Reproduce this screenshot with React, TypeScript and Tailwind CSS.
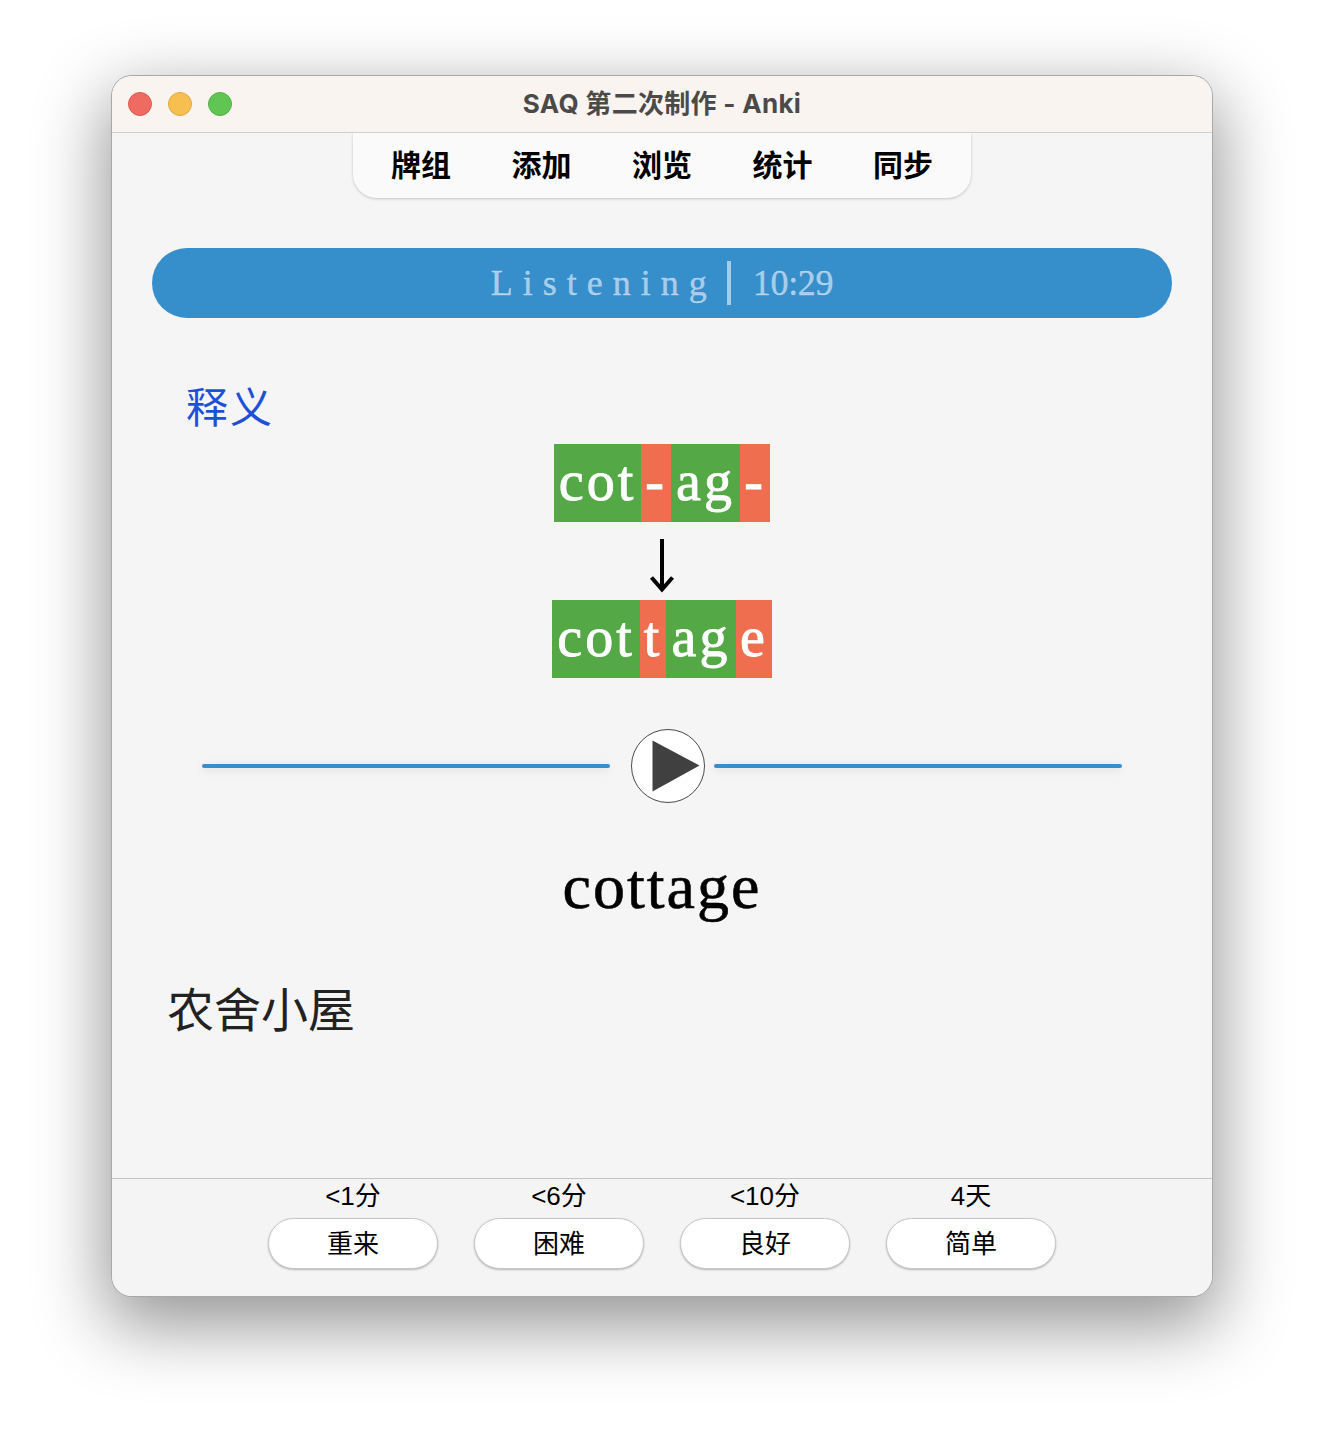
const serif = "font-['Liberation_Serif','Noto_Sans_CJK_SC',serif]";

const navItems = ['牌组', '添加', '浏览', '统计', '同步'];

const answers = [
  { time: '<1分', label: '重来' },
  { time: '<6分', label: '困难' },
  { time: '<10分', label: '良好' },
  { time: '4天', label: '简单' },
];

const GREEN = 'bg-[#55a846]';
const RED = 'bg-[#ef6e50]';

function Segment({ text, width, color }: { text: string; width: string; color: string }) {
  return (
    <span className={`flex h-[78px] items-center justify-center pb-[4px] text-[56px] leading-none tracking-[3px] text-white [-webkit-text-stroke:0.9px_white] ${width} ${color}`}>
      {text}
    </span>
  );
}

function PlayLine() {
  return <div className="h-[4px] w-[408px] rounded-full bg-[#368ecb] shadow-[0_2px_8px_rgba(0,0,0,0.12)]" />;
}

export default function App() {
  return (
    <div className="min-h-[1444px] bg-white pl-[112px] pt-[76px] font-['Inter','Noto_Sans_CJK_SC',sans-serif]">
      <div className="flex h-[1220px] w-[1100px] flex-col overflow-hidden rounded-[20px] bg-[#f5f5f5] shadow-[0_0_0_1px_#a8a8a8,0_24px_70px_6px_rgba(0,0,0,0.42)]">
        <div className="relative flex h-[57px] shrink-0 items-center border-b border-[#d2d0ce] bg-[#f9f4f0] pl-[16px]">
          <div className="flex gap-[16px]">
            <span className="size-[24px] rounded-full border border-[#dc5a50] bg-[#ef6a60]" />
            <span className="size-[24px] rounded-full border border-[#e0a940] bg-[#f6bf4f]" />
            <span className="size-[24px] rounded-full border border-[#54b048] bg-[#61c554]" />
          </div>
          <div className="absolute inset-x-0 top-0 text-center text-[26px] leading-[56px] font-bold tracking-[0.3px] text-[#4b4a48]">SAQ 第二次制作 - Anki</div>
        </div>

        <div className="flex flex-1 flex-col items-center">
          <div className="flex h-[65px] w-[618px] items-center justify-center rounded-b-[24px] bg-[#fafafa] shadow-[0_1px_3px_rgba(0,0,0,0.2)]">
            {navItems.map((item) => (
              <span key={item} className="w-[120.5px] text-center text-[30px] font-bold text-black">
                {item}
              </span>
            ))}
          </div>

          <div className={`mt-[50px] flex h-[70px] w-[1020px] items-center justify-center rounded-[35px] bg-[#368ecb] text-[36px] text-white/55 [-webkit-text-stroke:0.3px_rgba(255,255,255,0.55)] ${serif}`}>
            <span className="tracking-[10px]">Listening</span>
            <span className="ml-[10px] mr-[22px] h-[44px] w-[4px] bg-white/55" />
            <span className="tracking-[-0.3px]">10:29</span>
          </div>

          <div className={`mt-[67px] w-full pl-[74px] text-[42px] leading-[48px] tracking-[2px] text-[#1f50d8] ${serif}`}>释义</div>

          <div className={`mt-[11px] flex ${serif}`}>
            <Segment text="cot" width="w-[87px]" color={GREEN} />
            <Segment text="-" width="w-[30px]" color={RED} />
            <Segment text="ag" width="w-[69px]" color={GREEN} />
            <Segment text="-" width="w-[30px]" color={RED} />
          </div>

          <svg className="mb-[7px] mt-[17px] block" width="30" height="54" viewBox="0 0 30 54" fill="none" stroke="#000" strokeWidth="4">
            <path d="M15 0V50" />
            <path d="M4.5 38.5L15 50.5L25.5 38.5" />
          </svg>

          <div className={`flex ${serif}`}>
            <Segment text="cot" width="w-[88px]" color={GREEN} />
            <Segment text="t" width="w-[26px]" color={RED} />
            <Segment text="ag" width="w-[70px]" color={GREEN} />
            <Segment text="e" width="w-[36px]" color={RED} />
          </div>

          <div className="mt-[51px] flex w-[920px] items-center">
            <PlayLine />
            <div className="ml-[21px] mr-[9px] flex size-[74px] shrink-0 items-center justify-center rounded-full border-[1.5px] border-[#4a4a4a] bg-white">
              <svg className="ml-[15px]" width="48" height="52" viewBox="0 0 48 52">
                <path d="M0.5 0.5L47.5 25.5L0.5 51.5Z" fill="#404040" />
              </svg>
            </div>
            <PlayLine />
          </div>

          <div className={`mt-[47px] text-[64px] leading-[74px] tracking-[2px] text-black [-webkit-text-stroke:0.6px_black] ${serif}`}>cottage</div>

          <div className={`mt-[57px] w-full pl-[55px] text-[47px] leading-[60px] text-[#222] ${serif}`}>农舍小屋</div>
        </div>

        <div className="flex h-[118px] shrink-0 justify-center gap-[36px] border-t border-[#c4c4c4] bg-[#f4f4f4]">
          {answers.map((a) => (
            <div key={a.label} className="flex w-[170px] flex-col items-center">
              <span className="mt-[1px] h-[38px] font-['Liberation_Sans','Noto_Sans_CJK_SC',sans-serif] text-[26px] leading-[32px] text-black">{a.time}</span>
              <button className="h-[51px] w-[170px] rounded-[26px] border border-[#c6c6c6] bg-white text-[26px] text-black shadow-[0_1px_2px_rgba(0,0,0,0.25)]">
                {a.label}
              </button>
            </div>
          ))}
        </div>
      </div>
    </div>
  );
}
